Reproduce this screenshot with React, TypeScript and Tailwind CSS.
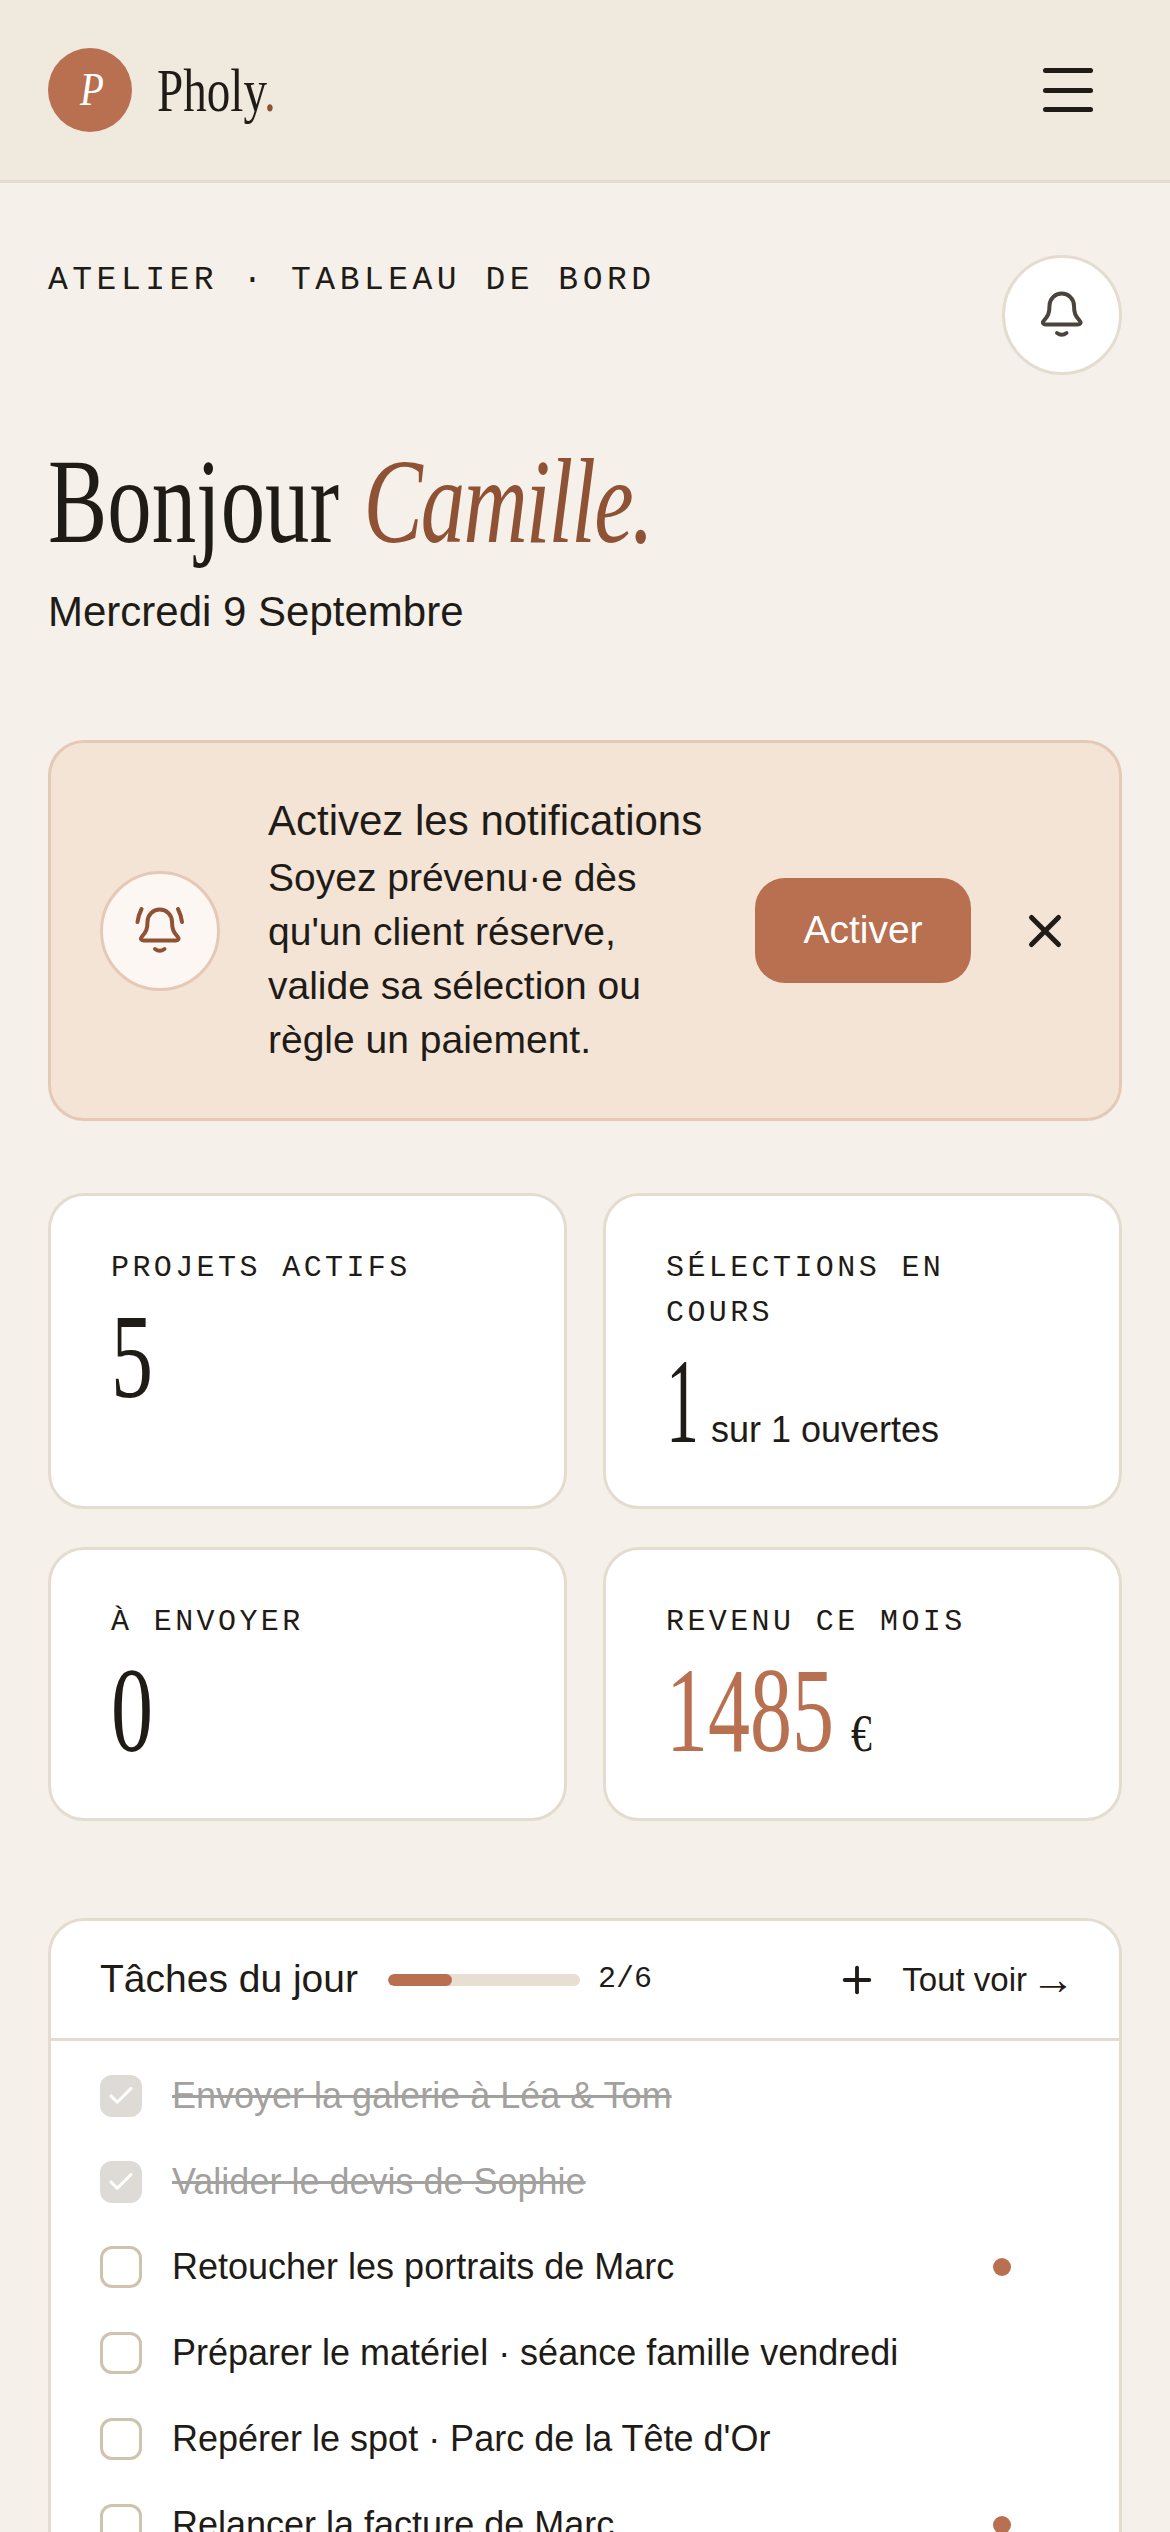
import React from "react";
import { Check, Plus, X } from "lucide-react";

const sans = "font-['Liberation_Sans',Arial,sans-serif]";

const tasks = [
  { label: "Envoyer la galerie à Léa & Tom", done: true, urgent: false },
  { label: "Valider le devis de Sophie", done: true, urgent: false },
  { label: "Retoucher les portraits de Marc", done: false, urgent: true },
  { label: "Préparer le matériel · séance famille vendredi", done: false, urgent: false },
  { label: "Repérer le spot · Parc de la Tête d'Or", done: false, urgent: false },
  { label: "Relancer la facture de Marc", done: false, urgent: true },
];

const BellIcon = ({ ring = false, className = "" }: { ring?: boolean; className?: string }) => (
  <svg
    viewBox={ring ? "-4 0 50 48" : "0 0 42 48"}
    width={ring ? 50 : 42}
    height={48}
    fill="none"
    stroke="currentColor"
    strokeWidth={4}
    strokeLinecap="round"
    strokeLinejoin="round"
    className={className}
  >
    <path d="M8.5 14.75A12.25 12.25 0 0 1 33 14.75C33 22 34.5 25 38.5 29.5C40.5 31.7 39.5 33.5 37 33.5H4.5C2 33.5 1 31.7 3 29.5C7 25 8.5 22 8.5 14.75Z" />
    <path d="M16 42Q20.75 45.5 25.5 42" />
    {ring && <path d="M2.5 2Q-.5 8-1.5 15" />}
    {ring && <path d="M39 2Q42 8 43 15" />}
  </svg>
);

const Label = ({ children }: { children: React.ReactNode }) => (
  <div className="font-['Liberation_Mono',monospace] text-[30px] leading-[45px] tracking-[3.4px] text-[#1f1b16]">
    {children}
  </div>
);

const Digits = ({ children, color = "text-[#1f1b16]" }: { children: React.ReactNode; color?: string }) => (
  <span className={`inline-block origin-left scale-x-[.7] whitespace-nowrap font-['Liberation_Serif',serif] text-[120px] leading-[120px] ${color}`}>
    {children}
  </span>
);

const App = () => {
  return (
    <div className={`h-[2532px] overflow-hidden bg-[#f5f1ea] text-[#1f1b16] ${sans}`}>
      <header className="flex h-[183px] items-center justify-between border-b-[3px] border-[#e4dccf] bg-[#f0e9dd] pr-[77px] pl-[48px]">
        <div className="flex items-center gap-[25px]">
          <div className="flex h-[84px] w-[84px] items-center justify-center rounded-full bg-[#b87050]">
            <span className="ml-[4px] inline-block scale-x-[.85] font-['Liberation_Serif',serif] text-[46px] leading-none text-white italic">P</span>
          </div>
          <span className="inline-block w-[116px] origin-left scale-x-[.76] font-['Liberation_Serif',serif] text-[62px] leading-none whitespace-nowrap">
            Pholy<span className="text-[#8f5234]">.</span>
          </span>
        </div>
        <div className="flex w-[50px] flex-col gap-[14.5px]">
          <div className="h-[5px] rounded-full bg-[#1f1b16]" />
          <div className="h-[5px] rounded-full bg-[#1f1b16]" />
          <div className="h-[5px] rounded-full bg-[#1f1b16]" />
        </div>
      </header>

      <main className="px-[48px] pt-[72px]">
        <div className="flex items-start justify-between">
          <div className="font-['Liberation_Mono',monospace] text-[33px] leading-[51px] tracking-[4.5px]">
            ATELIER · TABLEAU DE BORD
          </div>
          <div className="flex h-[120px] w-[120px] items-center justify-center rounded-full border-[3px] border-[#e4dccf] bg-white">
            <BellIcon className="text-[#4a443c]" />
          </div>
        </div>

        <h1 className="mt-[64px] font-['Liberation_Serif',serif] text-[120px] leading-[126px] font-normal whitespace-nowrap">
          <span className="inline-block origin-left scale-x-[.74]">
            Bonjour <span className="ml-[3px] tracking-[-2.5px] text-[#8f5234] italic">Camille.</span>
          </span>
        </h1>
        <p className="mt-[15px] text-[42px] leading-[63px]">Mercredi 9 Septembre</p>

        <section className="mt-[97px] flex h-[381px] items-center rounded-[36px] border-[3px] border-[#e5c9b6] bg-[#f4e4d6] pr-[57px] pl-[49px]">
          <div className="flex h-[120px] w-[120px] shrink-0 items-center justify-center rounded-full border-[3px] border-[#e5c9b6] bg-[#fcf7f2]">
            <BellIcon ring className="text-[#8f5234]" />
          </div>
          <div className="ml-[48px] w-[487px] shrink-0">
            <div className="text-[42px] leading-[54px]">Activez les notifications</div>
            <div className="mt-[3px] text-[39px] leading-[54px]">
              Soyez prévenu·e dès
              <br />
              qu'un client réserve,
              <br />
              valide sa sélection ou
              <br />
              règle un paiement.
            </div>
          </div>
          <div className="flex h-[105px] w-[216px] shrink-0 items-center justify-center rounded-[30px] bg-[#b87050] text-[39px] text-white">
            Activer
          </div>
          <X size={54} strokeWidth={2.2} className="ml-[47px] shrink-0" />
        </section>

        <section className="mt-[72px] grid grid-cols-2 gap-x-[36px] gap-y-[38px]">
          <div className="h-[316px] rounded-[36px] border-[3px] border-[#e4dccf] bg-white px-[60px] pt-[50px]">
            <Label>PROJETS ACTIFS</Label>
            <div className="mt-[6px]">
              <Digits>5</Digits>
            </div>
          </div>
          <div className="h-[316px] rounded-[36px] border-[3px] border-[#e4dccf] bg-white px-[60px] pt-[50px]">
            <Label>SÉLECTIONS EN COURS</Label>
            <div className="mt-[6px] flex items-baseline">
              <span className="w-[45px]">
                <span className="inline-block origin-left scale-x-[.55] font-['Liberation_Serif',serif] text-[120px] leading-[120px]">1</span>
              </span>
              <span className="text-[36px]">sur 1 ouvertes</span>
            </div>
          </div>
          <div className="h-[274px] rounded-[36px] border-[3px] border-[#e4dccf] bg-white px-[60px] pt-[50px]">
            <Label>À ENVOYER</Label>
            <div className="mt-[6px]">
              <Digits>0</Digits>
            </div>
          </div>
          <div className="h-[274px] rounded-[36px] border-[3px] border-[#e4dccf] bg-white px-[60px] pt-[50px]">
            <Label>REVENU CE MOIS</Label>
            <div className="mt-[6px] flex items-baseline">
              <span className="w-[185px]">
                <Digits color="text-[#b87050]">1485</Digits>
              </span>
              <span className="inline-block origin-left scale-x-[.8] font-['Liberation_Serif',serif] text-[52px]">€</span>
            </div>
          </div>
        </section>

        <section className="mt-[97px] rounded-[36px] border-[3px] border-[#e4dccf] bg-white">
          <div className="flex h-[120px] items-center border-b-[3px] border-[#e4dccf] pr-[44px] pl-[49px]">
            <span className="text-[39px]">Tâches du jour</span>
            <div className="ml-[30px] h-[12px] w-[192px] overflow-hidden rounded-full bg-[#e8ded2]">
              <div className="h-full w-1/3 rounded-full bg-[#b87050]" />
            </div>
            <span className="ml-[18px] font-['Liberation_Mono',monospace] text-[30px]">2/6</span>
            <Plus size={42} strokeWidth={2.2} className="mr-[24px] ml-auto" />
            <span className="flex items-center gap-[4px] text-[33px]">
              Tout voir
              <span className="font-['Liberation_Serif',serif] text-[44px] leading-none">→</span>
            </span>
          </div>
          <ul className="pt-[12px]">
            {tasks.map((task) => (
              <li key={task.label} className="flex h-[85.8px] items-center pr-[108px] pl-[49px]">
                {task.done ? (
                  <span className="flex h-[42px] w-[42px] items-center justify-center rounded-[12px] bg-[#dedad5]">
                    <Check size={30} strokeWidth={2.5} className="text-white" />
                  </span>
                ) : (
                  <span className="h-[42px] w-[42px] rounded-[12px] border-[3px] border-[#cfc3ae]" />
                )}
                <span className={`ml-[30px] text-[36px] ${task.done ? "text-[#a3a19e] line-through" : ""}`}>{task.label}</span>
                {task.urgent && <span className="ml-auto h-[18px] w-[18px] rounded-full bg-[#b87050]" />}
              </li>
            ))}
          </ul>
        </section>
      </main>
    </div>
  );
};

export default App;
